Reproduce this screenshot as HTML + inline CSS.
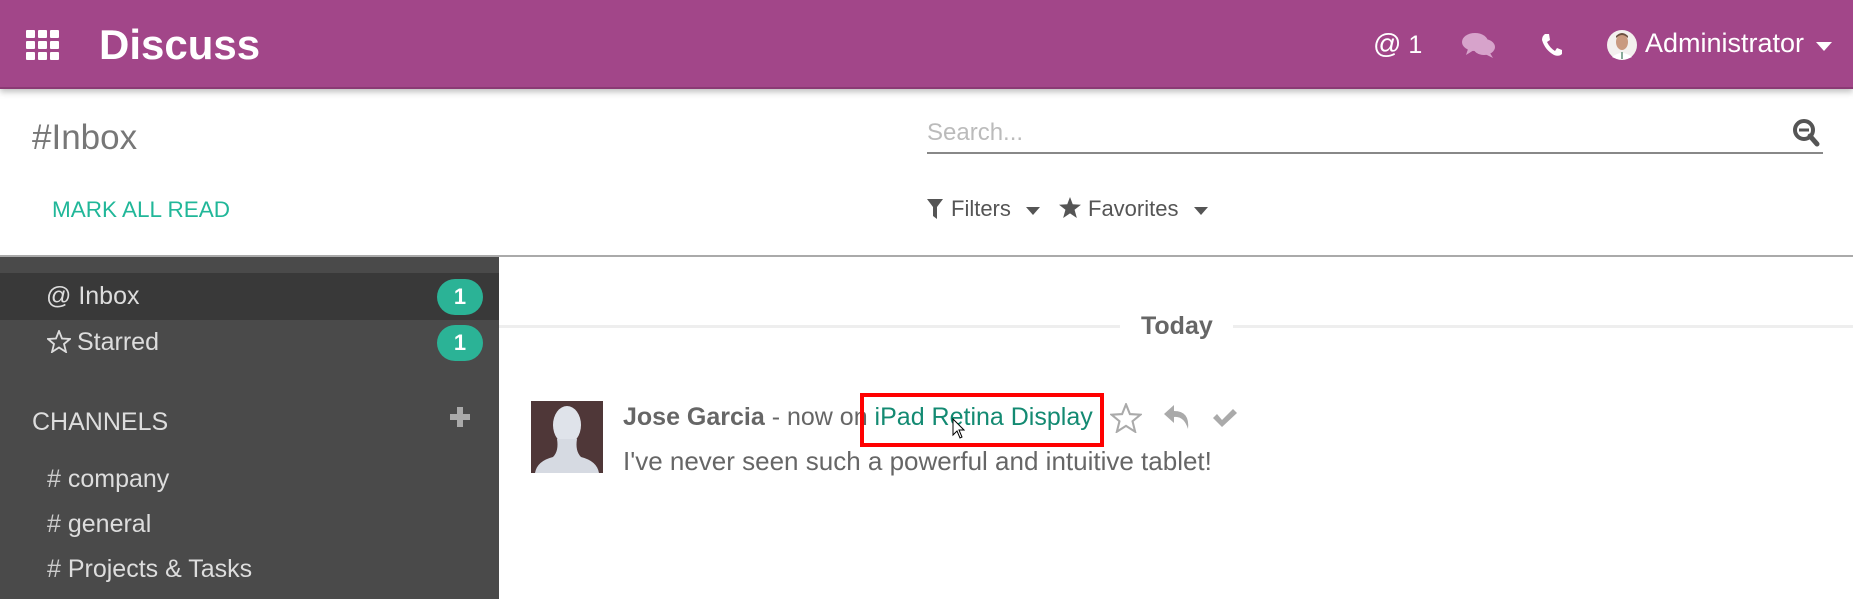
<!DOCTYPE html>
<html><head><meta charset="utf-8"><style>
*{margin:0;padding:0;box-sizing:border-box}
body{width:1853px;height:599px;overflow:hidden;background:#fff;font-family:"Liberation Sans",sans-serif;position:relative;color:#666}
.a{position:absolute;white-space:nowrap}
#hdr{position:absolute;left:0;top:0;width:1853px;height:89px;background:#a24689;border-bottom:2px solid #8a3a74;box-shadow:0 3px 6px rgba(0,0,0,.25)}
.w{color:#fff}
.badge{position:absolute;left:437px;width:46px;height:36px;border-radius:18px;background:#2bb396;color:#fff;font-weight:bold;font-size:22px;text-align:center;line-height:36px}
.sb{color:#ddd;font-size:25px}
</style></head><body>
<div id="hdr">
 <svg class="a" style="left:26px;top:30px" width="34" height="30" viewBox="0 0 34 30"><g fill="#fff">
 <rect x="0" y="0" width="9" height="8" rx="1"/><rect x="12" y="0" width="9" height="8" rx="1"/><rect x="24" y="0" width="9" height="8" rx="1"/>
 <rect x="0" y="11" width="9" height="8" rx="1"/><rect x="12" y="11" width="9" height="8" rx="1"/><rect x="24" y="11" width="9" height="8" rx="1"/>
 <rect x="0" y="22" width="9" height="8" rx="1"/><rect x="12" y="22" width="9" height="8" rx="1"/><rect x="24" y="22" width="9" height="8" rx="1"/></g></svg>
 <div class="a w" style="left:99px;top:21px;font-size:42px;line-height:48px;font-weight:bold">Discuss</div>
 <div class="a w" style="left:1373px;top:28px;font-size:28px;line-height:32px">@<span style="font-size:25px"> 1</span></div>
 <svg class="a" style="left:1462px;top:32px" width="34" height="26" viewBox="0 0 34 26"><g fill="#d7a3cb"><ellipse cx="13" cy="10" rx="13" ry="9"/><path d="M6 17 L4 23 L12 18Z"/><ellipse cx="22" cy="15" rx="11" ry="8"/><path d="M28 21 L31 26 L23 22Z"/></g></svg>
 <svg class="a" style="left:1541px;top:33px" width="22" height="24" viewBox="0 0 22 24"><path d="M4 1 L8 1 L9 7 L6 9 Q9 15 14 18 L16 15 L21 17 L21 21 Q18 24 13 22 Q4 17 1 7 Q1 3 4 1Z" fill="#fff"/></svg>
 <svg class="a" style="left:1607px;top:30px" width="30" height="30" viewBox="0 0 30 30"><circle cx="15" cy="15" r="15" fill="#f3f0ee"/><ellipse cx="15" cy="12" rx="6" ry="8" fill="#c99a80"/><path d="M9 8 Q15 2 21 8 L21 6 Q15 0 9 6Z" fill="#6b5040"/><path d="M5 27 Q15 19 25 27 Q15 32 5 27Z" fill="#fff"/><rect x="14" y="22" width="2" height="7" fill="#8a9"/></svg>
 <div class="a w" style="left:1645px;top:27px;font-size:27px;line-height:32px">Administrator</div>
 <svg class="a" style="left:1816px;top:42px" width="16" height="9"><path d="M0 0 L16 0 L8 9Z" fill="#fff"/></svg>
</div>
<div class="a" style="left:32px;top:117px;font-size:35px;line-height:42px;color:#777">#Inbox</div>
<div class="a" style="left:927px;top:119px;font-size:24px;color:#bbb">Search...</div>
<div class="a" style="left:927px;top:152px;width:896px;height:2px;background:#888"></div>
<svg class="a" style="left:1792px;top:118px" width="28" height="30" viewBox="0 0 28 30"><circle cx="12" cy="12" r="9" fill="none" stroke="#555" stroke-width="4"/><rect x="7" y="10.5" width="10" height="3" fill="#555"/><path d="M18 18 L25 26" stroke="#555" stroke-width="5" stroke-linecap="round"/></svg>
<div class="a" style="left:52px;top:197px;font-size:22.5px;color:#21b799">MARK ALL READ</div>
<svg class="a" style="left:927px;top:199px" width="16" height="20"><path d="M0 0 L16 0 L10 8 L10 20 L6 17 L6 8Z" fill="#555"/></svg>
<div class="a" style="left:951px;top:196px;font-size:22px;color:#555">Filters</div>
<svg class="a" style="left:1026px;top:207px" width="14" height="8"><path d="M0 0 L14 0 L7 8Z" fill="#555"/></svg>
<svg class="a" style="left:1059px;top:197px" width="22" height="21" viewBox="0 0 24 23"><path d="M12 0 L15 8 L24 8.5 L17 14 L19.5 23 L12 18 L4.5 23 L7 14 L0 8.5 L9 8Z" fill="#555"/></svg>
<div class="a" style="left:1088px;top:196px;font-size:22px;color:#555">Favorites</div>
<svg class="a" style="left:1194px;top:207px" width="14" height="8"><path d="M0 0 L14 0 L7 8Z" fill="#555"/></svg>
<div class="a" style="left:0;top:255px;width:1853px;height:2px;background:#aaa"></div>
<div class="a" style="left:0;top:257px;width:499px;height:342px;background:#4a4a4a"></div>
<div class="a" style="left:0;top:273px;width:499px;height:47px;background:#393939"></div>
<div class="a sb" style="left:46px;top:282px">@ Inbox</div>
<div class="badge" style="top:279px">1</div>
<svg class="a" style="left:47px;top:330px" width="24" height="23" viewBox="0 0 24 23"><path d="M12 1 L15 8.5 L23 9 L17 14 L19 22 L12 17.5 L5 22 L7 14 L1 9 L9 8.5Z" fill="none" stroke="#ddd" stroke-width="1.8"/></svg>
<div class="a sb" style="left:77px;top:328px">Starred</div>
<div class="badge" style="top:325px">1</div>
<div class="a sb" style="left:32px;top:408px">CHANNELS</div>
<svg class="a" style="left:450px;top:407px" width="20" height="20"><rect x="7" y="0" width="6" height="20" fill="#aaa"/><rect x="0" y="7" width="20" height="6" fill="#aaa"/></svg>
<div class="a sb" style="left:47px;top:465px;color:#ccc">#<span style="color:#ddd"> company</span></div>
<div class="a sb" style="left:47px;top:510px;color:#ccc">#<span style="color:#ddd"> general</span></div>
<div class="a sb" style="left:47px;top:555px;color:#ccc">#<span style="color:#ddd"> Projects &amp; Tasks</span></div>
<div class="a" style="left:499px;top:325px;width:621px;height:3px;background:#eee"></div>
<div class="a" style="left:1233px;top:325px;width:620px;height:3px;background:#eee"></div>
<div class="a" style="left:1141px;top:312px;font-size:25px;font-weight:bold;color:#666">Today</div>
<svg class="a" style="left:531px;top:401px" width="72" height="72" viewBox="0 0 72 72"><rect width="72" height="72" fill="#4f3738"/><ellipse cx="36" cy="24" rx="14" ry="19" fill="#dfe3ea"/><path d="M26 38 Q28 50 22 56 Q6 60 4 72 L68 72 Q66 60 50 56 Q44 50 46 38Z" fill="#d6dae2"/></svg>
<div class="a" style="left:623px;top:403px;font-size:25px"><b style="color:#666">Jose Garcia</b> - now on<span style="color:#138a72"> iPad Retina Display</span></div>
<div class="a" style="left:860px;top:393px;width:244px;height:54px;border:4px solid #f00"></div>
<svg class="a" style="left:1110px;top:403px" width="32" height="30" viewBox="0 0 24 23"><path d="M12 1 L15 8.5 L23 9 L17 14 L19 22 L12 17.5 L5 22 L7 14 L1 9 L9 8.5Z" fill="none" stroke="#aaa" stroke-width="1.6"/></svg>
<svg class="a" style="left:1164px;top:405px" width="28" height="26" viewBox="0 0 28 26"><path d="M10 0 L0 9 L10 18 L10 12 Q20 11 24 24 Q26 6 10 6Z" fill="#aaa"/></svg>
<svg class="a" style="left:1212px;top:408px" width="26" height="20" viewBox="0 0 26 20"><path d="M1 10 L5 6 L10 12 L21 1 L25 5 L10 19Z" fill="#aaa"/></svg>
<svg class="a" style="left:952px;top:418px" width="13" height="22" viewBox="0 0 13 22"><path d="M1 1 L1 17 L5 13 L8 20 L10 19 L7 12 L12 12Z" fill="#fff" stroke="#000" stroke-width="1"/></svg>
<div class="a" style="left:623px;top:446px;font-size:26px;color:#666">I've never seen such a powerful and intuitive tablet!</div>
</body></html>
